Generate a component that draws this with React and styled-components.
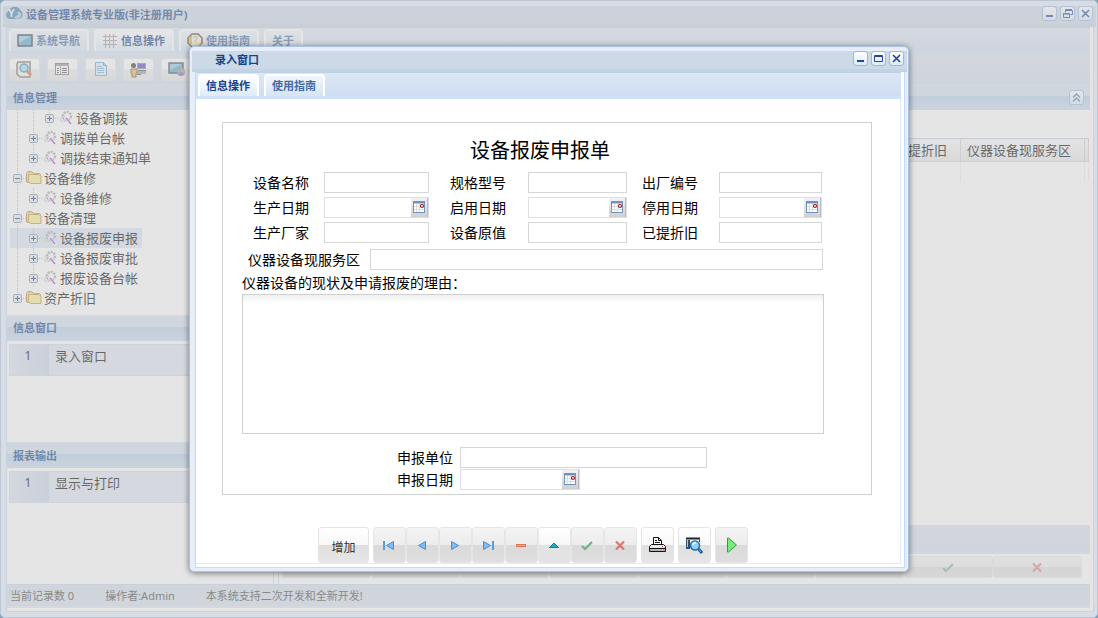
import { useState } from "react";
import styled, { createGlobalStyle } from "styled-components";

const tree = [
    { level: 2, text: "设备调拨" },
    { level: 1, text: "调拨单台帐" },
    { level: 1, text: "调拨结束通知单" },
    { level: 0, text: "设备维修", open: true },
    { level: 1, text: "设备维修" },
    { level: 0, text: "设备清理", open: true },
    { level: 1, text: "设备报废申报" },
    { level: 1, text: "设备报废审批" },
    { level: 1, text: "报废设备台帐" },
    { level: 0, text: "资产折旧" },
];

const fields = [
    { id: "name", text: "设备名称", gap: 15 },
    { id: "model", text: "规格型号", gap: 22 },
    { id: "serial", text: "出厂编号", gap: 21 },
    { id: "made", text: "生产日期", gap: 15, date: true },
    { id: "started", text: "启用日期", gap: 22, date: true },
    { id: "stopped", text: "停用日期", gap: 21, date: true },
    { id: "maker", text: "生产厂家", gap: 15 },
    { id: "value", text: "设备原值", gap: 22 },
    { id: "depreciation", text: "已提折旧", gap: 21 },
];

const navButtons = ["first", "prev", "next", "last", "minus", "up", "check", "cross"];

export default function App() {
    const [selected, setSelected] = useState(6);

    return (
        <>
            <GlobalStyle />
            <MainWindow>
                <TitleBar>
                    <LogoIcon />
                    <Title>设备管理系统专业版(非注册用户)</Title>
                    <WindowTools restore />
                </TitleBar>
                <WindowBody>
                    <Tabs>
                        <Tab><ScreenIcon />系统导航</Tab>
                        <Tab $active><GridIcon />信息操作</Tab>
                        <Tab><HelpIcon />使用指南</Tab>
                        <Tab>关于</Tab>
                    </Tabs>
                    <Toolbar>
                        <ToolButton aria-label="查询"><SearchPageIcon /></ToolButton>
                        <ToolButton aria-label="列表"><ListIcon /></ToolButton>
                        <ToolButton aria-label="文档"><DocIcon /></ToolButton>
                        <ToolButton aria-label="用户"><UserIcon /></ToolButton>
                        <ToolButton aria-label="网络"><NetIcon /></ToolButton>
                    </Toolbar>
                    <Columns>
                        <Side>
                            <PanelHeader>信息管理</PanelHeader>
                            <Tree $grow={205}>
                                {tree.map((node, i) => (
                                    <TreeRow key={i} $selected={i === selected} onClick={() => setSelected(i)}>
                                        {Array.from({ length: node.level }, (_, n) => <Guide key={n} />)}
                                        <Expander open={node.open} last={i === tree.length - 1} />
                                        {node.level === 0 ? <FolderIcon /> : <GearIcon />}
                                        <span>{node.text}</span>
                                    </TreeRow>
                                ))}
                            </Tree>
                            <PanelHeader>信息窗口</PanelHeader>
                            <ListPanel $grow={99}>
                                <ListRow><RowNumber>1</RowNumber><span>录入窗口</span></ListRow>
                            </ListPanel>
                            <PanelHeader>报表输出</PanelHeader>
                            <ListPanel $grow={113}>
                                <ListRow><RowNumber>1</RowNumber><span>显示与打印</span></ListRow>
                            </ListPanel>
                        </Side>
                        <Content>
                            <PanelHeader>
                                <SmallButton aria-label="折叠">
                                    <svg width="9" height="9" viewBox="0 0 9 9" fill="none" stroke="#4b86c0" strokeWidth="1.500">
                                        <path d="M1 4.500 4.500 1 8 4.500M1 8.500 4.500 5 8 8.500" />
                                    </svg>
                                </SmallButton>
                            </PanelHeader>
                            <TableArea>
                                <DataTable>
                                    <colgroup>
                                        <col />
                                        <col width="72" />
                                        <col width="124" />
                                        <col width="4" />
                                    </colgroup>
                                    <thead>
                                        <tr><th /><th>已提折旧</th><th>仪器设备现服务区</th><th /></tr>
                                    </thead>
                                    <tbody>
                                        <tr><td /><td /><td /><td /></tr>
                                    </tbody>
                                </DataTable>
                            </TableArea>
                            <FooterStrip />
                            <WideNav>
                                {["first", "prev", "next", "last", "plus", "minus", "up", "check", "cross"].map(name => (
                                    <NavButton key={name} aria-label={name}><NavIcon name={name} /></NavButton>
                                ))}
                            </WideNav>
                        </Content>
                    </Columns>
                    <StatusBar>
                        <span>当前记录数 0</span>
                        <span>操作者:Admin</span>
                        <span>本系统支持二次开发和全新开发!</span>
                    </StatusBar>
                </WindowBody>
            </MainWindow>

            <Mask>
                <Dialog role="dialog" aria-label="录入窗口">
                    <TitleBar $indent>
                        <Title>录入窗口</Title>
                        <WindowTools />
                    </TitleBar>
                    <WindowBody>
                        <Tabs>
                            <Tab $active>信息操作</Tab>
                            <Tab>使用指南</Tab>
                        </Tabs>
                        <DialogBody>
                            <Form>
                                <FormTitle>设备报废申报单</FormTitle>
                                <FieldGrid>
                                    {fields.map(f => <Field key={f.id} {...f} />)}
                                </FieldGrid>
                                <AreaRow><Field id="area" text="仪器设备现服务区" gap={10} /></AreaRow>
                                <ReasonLabel htmlFor="reason">仪器设备的现状及申请报废的理由：</ReasonLabel>
                                <Reason id="reason" />
                                <UnitGrid>
                                    <Field id="unit" text="申报单位" gap={7} />
                                    <Field id="applied" text="申报日期" gap={7} date short />
                                </UnitGrid>
                            </Form>
                            <Actions>
                                <AddButton>增加</AddButton>
                                <NavGroup>
                                    {navButtons.map(name => (
                                        <NavButton key={name} $light={name === "up"} aria-label={name}>
                                            <NavIcon name={name} />
                                        </NavButton>
                                    ))}
                                </NavGroup>
                                <ActionButton aria-label="打印"><PrinterIcon /></ActionButton>
                                <ActionButton aria-label="预览"><PreviewIcon /></ActionButton>
                                <ActionButton $dim aria-label="执行"><PlayIcon /></ActionButton>
                            </Actions>
                        </DialogBody>
                    </WindowBody>
                </Dialog>
            </Mask>
        </>
    );
}

function Field({ id, text, gap, date, short }) {
    const [value, setValue] = useState("");

    return (
        <>
            <Label htmlFor={id} $gap={gap}>{text}</Label>
            <InputBox $date={date} $short={short}>
                <input id={id} type="text" value={value} onChange={e => setValue(e.target.value)} />
                {date && <DateButton type="button" aria-label={text}><CalendarIcon /></DateButton>}
            </InputBox>
        </>
    );
}

function WindowTools({ restore }) {
    return (
        <Tools>
            <SmallButton aria-label="最小化">
                <svg width="11" height="11"><path d="M2 8h7" stroke="#2446a0" strokeWidth="2" /></svg>
            </SmallButton>
            <SmallButton aria-label="最大化">
                {restore ?
                    <svg width="11" height="11" fill="none" stroke="#2446a0">
                        <path d="M3.500 4.500V1.500H10M3.500 2.500H10.500V6.500H8.500M1.500 5.500h6v4h-6zM1.500 6h6" />
                    </svg> :
                    <svg width="11" height="11" fill="none" stroke="#2446a0">
                        <path d="M1.500 2.500h8v6h-8zM1 3.500h9" />
                    </svg>
                }
            </SmallButton>
            <SmallButton aria-label="关闭">
                <svg width="11" height="11"><path d="M2 2l7 7M9 2l-7 7" stroke="#2446a0" strokeWidth="1.700" /></svg>
            </SmallButton>
        </Tools>
    );
}

function Expander({ open, last }) {
    return (
        <Guide $last={last}>
            <svg width="16" height="20">
                <rect x="3.500" y="6.500" width="8" height="8" rx="1" fill="#e6edf6" stroke="#7c93ad" />
                <path d={open ? "M5 10.500h5" : "M5 10.500h5M7.500 8v5"} stroke="#223c63" />
                <path d="M13 10.500h3" stroke="#aaa" strokeDasharray="1 1" />
            </svg>
        </Guide>
    );
}

function NavIcon({ name }) {
    const blue = { fill: "#7fbcf2", stroke: "#4a8cd2", strokeWidth: 1 };
    return (
        <svg width="14" height="12" viewBox="0 0 14 12" fill="none">
            {name === "first" && <><path d="M2 2v9" stroke="#579de0" strokeWidth="2" /><path d="M11.500 2.500v8L4.500 6.500z" {...blue} /></>}
            {name === "prev" && <path d="M10.500 2.500v8L3.500 6.500z" {...blue} />}
            {name === "next" && <path d="M3.500 2.500v8l7-4z" {...blue} />}
            {name === "last" && <><path d="M12 2v9" stroke="#579de0" strokeWidth="2" /><path d="M2.500 2.500v8l7-4z" {...blue} /></>}
            {name === "plus" && <path d="M2 6.500h10M7 2v9" stroke="#5fa876" strokeWidth="3" />}
            {name === "minus" && <><path d="M2 6.500h10" stroke="#dc7650" strokeWidth="3" /><path d="M3 6.500h8" stroke="#f2a987" /></>}
            {name === "up" && <path d="M2.500 8.500h9L7 4z" fill="#19b0c4" stroke="#137b93" />}
            {name === "check" && <path d="M2 7l3 3 7-7" stroke="#74b08b" strokeWidth="2.200" />}
            {name === "cross" && <path d="M3 2.500l8 8M11 2.500l-8 8" stroke="#e0736d" strokeWidth="2.200" />}
        </svg>
    );
}

const LogoIcon = () => (
    <svg width="17" height="15" viewBox="0 0 17 15">
        <path d="M4 13C-1 13-1 6 3 5 4 0 12-1 14 4c4 2 3 9-1 9z" fill="#3f84b4" />
        <path d="M9 12.500c4 1 7-1 6-5-1-2-3-2-5-1 3 0 3 2 1 3s-3 1-2 3z" fill="#a5cbe0" />
        <text x="2" y="11" fill="#fff" fontFamily="Liberation Sans" fontWeight="bold" fontSize="10">Y</text>
    </svg>
);

const ScreenIcon = () => (
    <svg width="16" height="14" viewBox="0 0 16 14">
        <rect x="1" y="1" width="14" height="11" fill="#5fa3d3" stroke="#333f48" strokeWidth="1.500" />
        <path d="M2 2h12L2 9z" fill="#9ccbea" />
    </svg>
);

const GridIcon = () => (
    <svg width="16" height="16" fill="none" stroke="#a09a94">
        <path d="M1 3.500h14M1 7.500h14M1 11.500h14M3.500 1v14M7.500 1v14M11.500 1v14" />
    </svg>
);

const HelpIcon = () => (
    <svg width="16" height="16" viewBox="0 0 16 16">
        <path d="M5 1h6l4 4v5l-4 4H5l-4-4V5z" fill="#fff3c2" stroke="#4d3f31" strokeWidth="1.500" />
        <path d="M2 5l3-3v11l-3-3z" fill="#efb23a" />
        <path d="M6 5c1-2 4-2 4 0S8 7 8 9" fill="none" stroke="#a9bfe6" strokeWidth="1.500" />
        <path d="M5 12c4 2 7 0 9-4v3l-3 3H6z" fill="#f3c75b" />
    </svg>
);

const SearchPageIcon = () => (
    <svg width="17" height="17" viewBox="0 0 17 17">
        <path d="M2 1h12v15H4l-3-3V3z" fill="#f5f5f5" stroke="#77736f" strokeWidth="1.500" />
        <circle cx="8" cy="7" r="4" fill="#a3e2f5" stroke="#498bb7" strokeWidth="1.500" />
        <path d="M11 10l4 4" stroke="#ef6836" strokeWidth="3" />
    </svg>
);

const ListIcon = () => (
    <svg width="15" height="14" viewBox="0 0 15 14">
        <rect x=".5" y="1.500" width="13" height="11" fill="#fafafa" stroke="#777" />
        <path d="M1 3h13" stroke="#999" strokeWidth="2" />
        <path d="M2 6.500h2M2 8.500h2M2 10.500h2M7 6.500h5M7 8.500h5M7 10.500h5" stroke="#555" />
        <path d="M5.500 4v8" stroke="#999" />
    </svg>
);

const DocIcon = () => (
    <svg width="14" height="16" viewBox="0 0 14 16">
        <path d="M1.500 1.500h8l3 3v10h-11z" fill="#dff3ff" stroke="#5ca5d6" />
        <path d="M9.500 1.500v3h3" fill="#9acbe9" stroke="#5ca5d6" />
        <path d="M3 5.500h5M3 7.500h7M3 9.500h7M3 11.500h7" stroke="#78b7df" />
    </svg>
);

const UserIcon = () => (
    <svg width="17" height="17" viewBox="0 0 17 17">
        <rect x="7.500" y="2.500" width="8" height="5" fill="#5945cc" stroke="#888" />
        <path d="M7 10h9v3H7z" fill="#9a9ab8" />
        <path d="M7 13.500h4M8 9.500h8" stroke="#555" />
        <circle cx="3.500" cy="4.500" r="2.500" fill="#333" />
        <path d="M1 8h6v4H6v4H2v-4H1z" fill="#e9b765" stroke="#775631" />
    </svg>
);

const NetIcon = () => (
    <svg width="17" height="16" viewBox="0 0 17 16">
        <rect x="1" y="2" width="14" height="10" fill="#61a5ce" stroke="#3c4c58" strokeWidth="1.500" />
        <path d="M2 3h12L2 9z" fill="#96c6e3" />
        <circle cx="13" cy="11" r="4" fill="#4c9cd8" />
        <path d="M13 7a4 4 0 0 1 3 5l-4-1z" fill="#e69438" />
        <path d="M10 13l4-2 1 3c-2 1-4 1-5-1z" fill="#a94ab0" />
        <path d="M10 9l2-1v3h-3z" fill="#74b963" />
    </svg>
);

const FolderIcon = () => (
    <svg width="16" height="14" viewBox="0 0 16 14">
        <path d="M.5 11V2.500L2 .5h3.500l2 2h6l1 1v8h-12z" fill="#f6d577" stroke="#b8893a" />
        <path d="M2.500 3.500h10.500l2 2v7H4.500l-2-2z" fill="#fdee8e" stroke="#c0943e" />
    </svg>
);

const GearIcon = () => (
    <svg width="16" height="16" viewBox="0 0 16 16">
        <circle cx="9" cy="6" r="4" fill="none" stroke="#a6a6a6" strokeWidth="2.500" strokeDasharray="2 1" />
        <circle cx="5" cy="9" r="2.500" fill="none" stroke="#c4c4c4" strokeWidth="2" strokeDasharray="1 1" />
        <path d="M7 7l7 8" stroke="#fff" strokeWidth="3" />
        <path d="M8 8l5 6" stroke="#a04fd0" strokeWidth="1.500" />
    </svg>
);

const CalendarIcon = () => (
    <svg width="13" height="13" viewBox="0 0 13 13">
        <rect x=".5" y=".5" width="11" height="11" fill="#fff" stroke="#6d94bf" />
        <path d="M0 1.500h12" stroke="#6d94bf" strokeWidth="2" />
        <path d="M1 5.500h10M1 8.500h10M3.500 3v8M6.500 3v8" stroke="#dcdcdc" />
        <circle cx="9" cy="5" r="1.500" fill="#fff" stroke="#a01818" strokeWidth="1.200" />
    </svg>
);

const PrinterIcon = () => (
    <svg width="17" height="16" viewBox="0 0 17 16">
        <path d="M4.500 7V.5h5l3 3V7" fill="#fff" stroke="#111" />
        <path d="M9.500.5v3h3M6 3.500h2M6 5.500h5" fill="none" stroke="#111" />
        <path d="M2.500 7.500h12l2 2v5H.5v-5z" fill="#e8e8e8" stroke="#111" />
        <path d="M1 11.500h15" stroke="#111" />
        <path d="M1 13h15" stroke="#b4b4b4" strokeWidth="2" />
        <path d="M13 9.500h1" stroke="#d33" />
    </svg>
);

const PreviewIcon = () => (
    <svg width="17" height="17" viewBox="0 0 17 17">
        <path d="M0 1.500h14" stroke="#222" strokeWidth="2" />
        <path d="M13.500 1v4" stroke="#444" />
        <path d="M0 3h4v9H0z" fill="#36506a" />
        <path d="M1.500 3v7" stroke="#a9cfeb" />
        <circle cx="9" cy="8.500" r="4.500" fill="#8fd3fb" stroke="#1d6fae" strokeWidth="1.500" />
        <path d="M7 8c0-2 2-2.500 3-2.500" fill="none" stroke="#fff" strokeWidth="1.500" />
        <path d="M12.500 12l3.500 4" stroke="#1d5d93" strokeWidth="3" />
        <path d="M13 12.500l2 2.500" stroke="#56b4ee" />
    </svg>
);

const PlayIcon = () => (
    <svg width="12" height="16" viewBox="0 0 12 16">
        <path d="M1.500 1v14h1L10.500 8l-8-7z" fill="#6ff07a" stroke="#4c8b54" />
    </svg>
);

const GlobalStyle = createGlobalStyle`
    * {
        box-sizing: border-box;
    }

    body {
        margin: 0;
        background: #3f75a6;
        font-family: "Noto Sans", "Noto Sans CJK SC", sans-serif;
        font-size: 13px;
        color: #000;
    }

    button, input, textarea {
        font-family: inherit;
        margin: 0;
        padding: 0;
    }

    svg {
        display: block;
        flex-shrink: 0;
    }
`;

const Frame = styled.div`
    display: flex;
    flex-direction: column;
    padding: 5px 3px 3px 5px;
    background: #e6eefb;
    border: 1px solid #abc3df;
    border-radius: 5px;
`;

const MainWindow = styled(Frame)`
    height: 100vh;
    min-height: 560px;
    padding-bottom: 5px;
`;

const Mask = styled.div`
    position: fixed;
    inset: 0;
    display: grid;
    place-items: center;
    background: rgba(204, 204, 204, 0.5);
`;

const Dialog = styled(Frame)`
    width: 720px;
    max-width: 100%;
    padding-top: 4px;
    box-shadow: 0 1px 6px rgba(0, 0, 0, 0.5);
`;

const TitleBar = styled.div`
    height: 21px;
    display: flex;
    align-items: flex-start;
    gap: 3px;
    padding: 0 3px 0 ${({ $indent }) => $indent ? 23 : 3}px;
    margin: 0 -2px 0 -3px;
    background: #ccd9e7;
    border-bottom: 3px solid #c4d3e3;
`;

const Title = styled.h1`
    flex: 1;
    margin: 0;
    font-size: 11px;
    line-height: 18px;
    font-weight: 700;
    color: #15428b;
`;

const Tools = styled.div`
    display: flex;
    gap: 3px;
`;

const SmallButton = styled.button`
    width: 15px;
    height: 15px;
    display: flex;
    align-items: center;
    justify-content: center;
    background: linear-gradient(#fff, #dcebfb);
    border: 1px solid #98b9e2;
    border-radius: 3px;
`;

const WindowBody = styled.div`
    flex: 1;
    min-height: 0;
    display: flex;
    flex-direction: column;
    padding: 0 3px 3px 0;
    background: #fff;
    border: 1px solid #c5daf4;
    border-top: 0;
`;

const Tabs = styled.div`
    height: 27px;
    flex-shrink: 0;
    display: flex;
    align-items: flex-end;
    gap: 5px;
    padding: 0 2px;
    background: linear-gradient(#dee8f5, #cfddf0);
    border-bottom: 3px solid #cfe2f9;
    box-shadow: inset 0 1px #bcd0ea;
`;

const Tab = styled.button`
    height: 22px;
    display: flex;
    align-items: center;
    gap: 3px;
    padding: 0 7px 0 6px;
    border: 2px solid #fdfeff;
    border-bottom: 0;
    border-radius: 4px 4px 0 0;
    background: ${({ $active }) => $active ? "linear-gradient(#fff, #deebfb)" : "linear-gradient(#f1f6fc, #d6e4f6)"};
    color: ${({ $active }) => $active ? "#15428b" : "#416aa3"};
    font-size: 11px;
    font-weight: 700;
    line-height: 16px;
    white-space: nowrap;
`;

const Toolbar = styled.div`
    height: 30px;
    flex-shrink: 0;
    display: flex;
    align-items: center;
    gap: 7px;
    padding: 0 2px;
    background: linear-gradient(#dae3ef, #d0dded);
`;

const ToolButton = styled.button`
    width: 31px;
    height: 23px;
    display: flex;
    align-items: center;
    justify-content: center;
    background: linear-gradient(#fff 50%, #ececec 50%, #e6e6e6);
    border: 1px solid #e4e7eb;
    border-radius: 3px;
`;

const Columns = styled.div`
    flex: 1;
    min-height: 0;
    display: grid;
    grid-template-columns: 267px 1fr;
    column-gap: 4px;
`;

const Side = styled.div`
    display: flex;
    flex-direction: column;
    min-height: 0;
    border-right: 1px solid #ccdaf0;
`;

const PanelHeader = styled.h2`
    height: 26px;
    flex-shrink: 0;
    display: flex;
    align-items: center;
    justify-content: flex-start;
    margin: 0;
    padding: 0 6px;
    background: linear-gradient(#d3e0f1 45%, #b5ceea 45%, #cbdcee);
    border-top: 1px solid #dbe6f4;
    color: #15428b;
    font-size: 11px;
    font-weight: 700;
    line-height: 16px;

    button {
        margin-left: auto;
    }
`;

const Tree = styled.ul`
    flex: ${({ $grow }) => $grow} 1 0;
    min-height: 0;
    overflow: hidden;
    display: flex;
    flex-direction: column;
    align-items: flex-start;
    justify-content: flex-start;
    list-style: none;
    margin: 0;
    padding: 0 3px;

    li:first-child {
        margin-top: -2px;
    }
`;

const TreeRow = styled.li`
    height: 20px;
    flex-shrink: 0;
    display: flex;
    align-items: center;
    padding-right: 4px;
    background: ${({ $selected }) => $selected ? "#dce7f6" : "none"};
    line-height: 18px;
    cursor: pointer;

    span {
        margin-left: 2px;
    }
`;

const Guide = styled.i`
    width: 16px;
    height: ${({ $last }) => $last ? 14 : 20}px;
    align-self: flex-start;
    background: linear-gradient(#b5b5b5 50%, transparent 50%) 7px 0 / 1px 2px repeat-y;
`;

const ListPanel = styled.ul`
    flex: ${({ $grow }) => $grow} 1 0;
    min-height: 0;
    list-style: none;
    margin: 0;
    padding: 3px 0 0 2px;
`;

const ListRow = styled.li`
    height: 32px;
    display: flex;
    gap: 6px;
    background: #dfe6f2;
    border: 1px solid #cfdcee;
    line-height: 22px;
`;

const RowNumber = styled.b`
    width: 39px;
    padding-right: 3px;
    background: linear-gradient(to right, #dce4f0, #c9d5e9);
    font-size: 12px;
    font-weight: 400;
    text-align: center;
`;

const Content = styled.div`
    display: flex;
    flex-direction: column;
    min-width: 0;
    min-height: 0;
    border-left: 1px solid #ccdaf0;
`;

const TableArea = styled.div`
    flex: 1;
    min-height: 0;
    padding: 28px 1px 0 3px;
`;

const DataTable = styled.table`
    width: 100%;
    table-layout: fixed;
    border-collapse: collapse;

    th {
        height: 23px;
        padding: 0 6px;
        background: linear-gradient(#fafafa, #e6e6e6);
        border: solid #d0d0d0;
        border-width: 1px 1px 1px 0;
        border-top-color: #c2d2e4;
        font-weight: 400;
        line-height: 20px;
        text-align: left;
        white-space: nowrap;
    }

    td {
        height: 20px;
        padding: 0;
        border-right: 1px solid #ededed;
    }
`;

const FooterStrip = styled.div`
    height: 29px;
    flex-shrink: 0;
    background: linear-gradient(#dbe2ed, #d2dfee);
    border-bottom: 2px solid #dbe4f0;
`;

const NavGroup = styled.div`
    display: flex;
    width: 264px;
    height: 36px;

    button {
        flex: 1;
    }
`;

const WideNav = styled(NavGroup)`
    width: auto;
    height: 22px;
    flex-shrink: 0;
    margin: 2px 8px 6px 3px;
    opacity: 0.9;
`;

const NavButton = styled.button`
    display: flex;
    align-items: center;
    justify-content: center;
    padding-right: 2px;
    background: ${({ $light }) => $light
        ? "linear-gradient(#fff, #f6f6f6 50%, #e2e2e2 50%, #e4e4e4)"
        : "linear-gradient(#f4f4f4, #ececec 50%, #dadada 50%, #dedede)"};
    border: 1px solid #e6e6e6;
    border-radius: 3px;
`;

const StatusBar = styled.div`
    height: 24px;
    flex-shrink: 0;
    display: flex;
    align-items: center;
    gap: 31px;
    padding: 0 3px;
    background: linear-gradient(#d4deeb, #d4e0ed);
    border-top: 1px solid #c5d5ea;
    border-bottom: 2px solid #dce7f5;
    color: #444;
    font-size: 11px;
    line-height: 16px;
`;

const DialogBody = styled.div`
    display: flex;
    flex-direction: column;
    padding: 23px 28px 0 26px;
    border-right: 1px solid #e1eaf6;
    border-bottom: 1px solid #e1eaf6;
`;

const Form = styled.form`
    padding: 12px 47px 4px 19px;
    border: 1px solid #d0d0d0;
`;

const FormTitle = styled.h2`
    margin: 0 -28px 7px 0;
    padding: 1px 14px 0 0;
    font-size: 20px;
    font-weight: 400;
    line-height: 29px;
    text-align: center;
`;

const FieldGrid = styled.div`
    display: grid;
    grid-template-columns: 82px 105fr 99px 99fr 92px 103fr;
    row-gap: 4px;
    margin-right: 2px;
`;

const Label = styled.label`
    padding: 1px ${({ $gap }) => $gap}px 0 0;
    font-size: 14px;
    line-height: 20px;
    text-align: right;
    white-space: nowrap;
`;

const InputBox = styled.div`
    width: ${({ $short }) => $short ? "120px" : "auto"};
    height: 21px;
    min-width: 0;
    display: flex;
    border: 1px solid ${({ $date }) => $date ? "#dedee8" : "#d6d6d6"};

    input {
        flex: 1;
        min-width: 0;
        border: 0;
        outline: 0;
        background: none;
        font-size: 13px;
    }
`;

const DateButton = styled.button`
    width: 17px;
    display: flex;
    align-items: center;
    justify-content: center;
    background: linear-gradient(#f3f3f5, #cfcfcf);
    border: 0;
    border-right: 1px solid #b4bccb;
`;

const AreaRow = styled.div`
    display: grid;
    grid-template-columns: 128px 1fr;
    margin: 6px 1px 0 0;
`;

const ReasonLabel = styled.label`
    display: block;
    margin: 3px 0 1px;
    font-size: 14px;
    line-height: 20px;
`;

const Reason = styled.textarea`
    display: block;
    width: 100%;
    height: 140px;
    border: 1px solid #d0d0d0;
    outline: 0;
    resize: none;
    background: linear-gradient(#eef0f0, #fff 8px);
`;

const UnitGrid = styled.div`
    display: grid;
    grid-template-columns: 63px 247px;
    row-gap: 1px;
    margin: 13px 0 0 155px;
`;

const Actions = styled.div`
    display: flex;
    justify-content: flex-start;
    gap: 4px;
    margin: 32px 0 0 96px;
`;

const ActionButton = styled.button`
    width: 33px;
    height: 36px;
    display: flex;
    align-items: center;
    justify-content: center;
    background: ${({ $dim }) => $dim
        ? "linear-gradient(#f4f4f4, #ececec 50%, #dadada 50%, #dedede)"
        : "linear-gradient(#fff, #f8f8f8 50%, #dfdfdf 50%, #e6e6e6)"};
    border: 1px solid #e4e4e4;
    border-radius: 3px;
`;

const AddButton = styled(ActionButton)`
    width: 51px;
    padding-top: 3px;
    color: #333;
    font-size: 12px;
`;
